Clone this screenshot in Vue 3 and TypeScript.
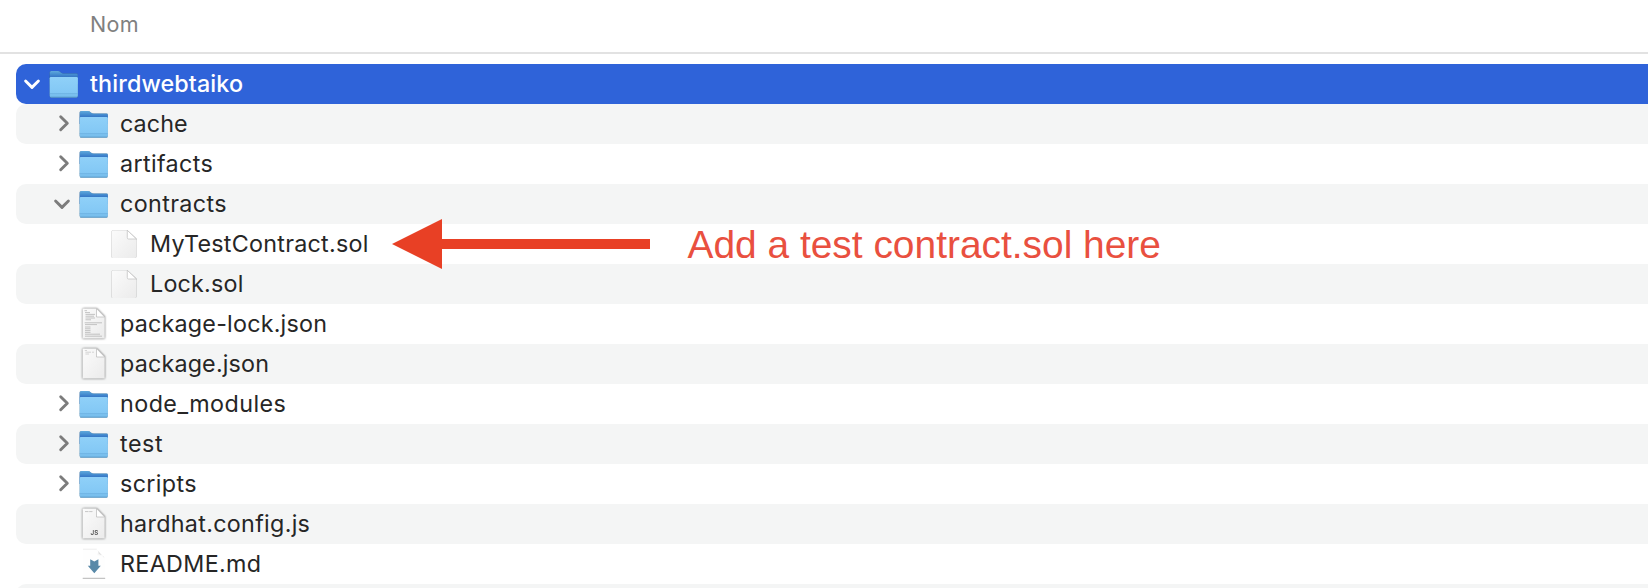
<script setup lang="ts">
type Kind = 'folder' | 'blank' | 'lines' | 'json' | 'js' | 'md'

interface Entry {
  name: string
  kind: Kind
  depth: number
  open?: boolean
  spacing: number
}

const entries: Entry[] = [
  { name: 'thirdwebtaiko', kind: 'folder', depth: 0, open: true, spacing: 0.12 },
  { name: 'cache', kind: 'folder', depth: 1, open: false, spacing: 0.08 },
  { name: 'artifacts', kind: 'folder', depth: 1, open: false, spacing: 0.36 },
  { name: 'contracts', kind: 'folder', depth: 1, open: true, spacing: 0.38 },
  { name: 'MyTestContract.sol', kind: 'blank', depth: 2, spacing: 0.26 },
  { name: 'Lock.sol', kind: 'blank', depth: 2, spacing: 0.22 },
  { name: 'package-lock.json', kind: 'lines', depth: 1, spacing: 0.22 },
  { name: 'package.json', kind: 'json', depth: 1, spacing: 0.18 },
  { name: 'node_modules', kind: 'folder', depth: 1, open: false, spacing: 0.45 },
  { name: 'test', kind: 'folder', depth: 1, open: false, spacing: 0.55 },
  { name: 'scripts', kind: 'folder', depth: 1, open: false, spacing: 0.36 },
  { name: 'hardhat.config.js', kind: 'js', depth: 1, spacing: 0.31 },
  { name: 'README.md', kind: 'md', depth: 1, spacing: 0.34 },
]
</script>

<template>
  <main class="finder">
    <svg class="defs" width="0" height="0" aria-hidden="true">
      <defs>
        <linearGradient id="folder-back" gradientUnits="userSpaceOnUse" x1="0" y1="7" x2="0" y2="13">
          <stop offset="0" stop-color="#5fa9dc" />
          <stop offset="0.45" stop-color="#4a93d2" />
          <stop offset="1" stop-color="#3576c6" />
        </linearGradient>
        <linearGradient id="folder-front" x1="0" y1="0" x2="0" y2="1">
          <stop offset="0" stop-color="#8fd0f8" />
          <stop offset="0.75" stop-color="#83c8f5" />
          <stop offset="1" stop-color="#72b9e8" />
        </linearGradient>
        <linearGradient id="paper" x1="0" y1="0" x2="1" y2="1">
          <stop offset="0" stop-color="#fbfbfb" />
          <stop offset="1" stop-color="#ebebeb" />
        </linearGradient>
      </defs>
    </svg>

    <header class="columns"><span>Nom</span></header>

    <ul class="tree">
      <li
        v-for="entry in entries"
        :key="entry.name"
        class="row"
        :class="[`depth-${entry.depth}`, { selected: entry.depth === 0 }]"
      >
        <span class="toggle">
          <svg v-if="entry.open === true" width="30" height="40" viewBox="0 0 30 40">
            <path d="M9.6 17 L16 23.4 L22.4 17" class="chevron" />
          </svg>
          <svg v-else-if="entry.open === false" width="30" height="40" viewBox="0 0 30 40">
            <path d="M14.7 12.8 L21.3 19.3 L14.7 25.8" class="chevron" />
          </svg>
        </span>

        <svg v-if="entry.kind === 'folder'" class="icon shadowed" width="30" height="40" viewBox="0.7 0 30 40">
          <path d="M.3 8.6 Q.3 7 1.9 7 H8.6 Q10.2 7 11.3 8.2 Q12.6 9.6 14.4 9.6 H27.2 Q28.6 9.6 28.6 11 V20 H.3 Z" fill="url(#folder-back)" />
          <path d="M.3 14.3 Q.3 13 1.6 13 H27.3 Q28.6 13 28.6 14.3 V31.8 Q28.6 33.5 27 33.5 H1.9 Q.3 33.5 .3 31.8 Z" fill="url(#folder-front)" />
          <path d="M.5 29.7 H28.4" stroke="#6aaee0" stroke-width=".8" />
          <path d="M.9 33.1 H28" stroke="#5c9fd2" stroke-width=".8" />
        </svg>

        <svg v-else-if="entry.kind === 'blank'" class="icon shadowed" width="30" height="40" viewBox="0 0 30 40">
          <path d="M4 6.3 H17.3 L26.4 15 V32.6 Q26.4 34.1 24.9 34.1 H3 Q1.5 34.1 1.5 32.6 V7.8 Q1.5 6.3 3 6.3 Z" fill="url(#paper)" />
          <path d="M17.3 6.3 V13.8 Q17.3 15 18.5 15 H26.4 Z" fill="#fff" stroke="#bdbdbd" stroke-width=".7" />
        </svg>

        <svg v-else-if="entry.kind === 'md'" class="icon" width="30" height="40" viewBox="0 0 30 40">
          <path d="M3 5.2 H17 L24.8 14 V33.8 H3 Z" fill="#fefefe" />
          <path d="M3 5.2 H16.8" stroke="#eee" stroke-width="1" />
          <path d="M16.6 5.2 Q19 7 18.4 10.6 Q23 10.6 24.6 14.2 Z" fill="#dedede" />
          <path d="M17.6 9 V11.3 Q22 11 23.8 13.6 Z" fill="#f6f6f6" />
          <path d="M2.7 34.3 H25.2" stroke="#b5b5b5" stroke-width="1" />
          <path d="M10.2 15.2 L14.3 17.4 L18.4 15.2 V21.8 H20.8 L14.3 29.2 L7.8 21.8 H10.2 Z" fill="#5989a8" />
        </svg>

        <svg v-else class="icon strong" width="30" height="40" viewBox="0 0 30 40">
          <path d="M3.6 4.6 H16.5 L24.7 13 V34.5 H2.6 V5.6 Q2.6 4.6 3.6 4.6 Z" fill="url(#paper)" />
          <path d="M16.5 4.6 V13 H24.7 Z" fill="#fff" stroke="#b8b8b8" stroke-width=".7" />
          <g v-if="entry.kind === 'lines'" stroke="#bcbcbc" stroke-width=".9">
            <path d="M4.5 6.7 H7 M5 8.6 H10 M5.5 10.4 H15 M5.5 12.2 H14 M5.5 14 H15 M5.5 15.8 H11" />
            <path d="M4.7 18.8 H22 M5 20.6 H17" />
            <path d="M5 23 H10.5 M5 24.8 H10.5 M5 26.6 H10.5 M5 28.4 H10.5 M5 30.2 H20 M5 32.2 H22" />
          </g>
          <path v-else-if="entry.kind === 'json'" d="M4.8 6.5 H7 M5.4 8.2 H11 M12 8.2 H14 M5.4 10 H9" stroke="#cfcfcf" stroke-width=".9" />
          <path v-else d="M5 7.6 H8.5 M9.2 7.6 H12.5" stroke="#c6c6c6" stroke-width="1" />
          <text v-if="entry.kind === 'js'" x="14.4" y="31" class="badge">JS</text>
        </svg>

        <span class="label" :style="{ letterSpacing: `${entry.spacing}px` }">{{ entry.name }}</span>

        <span v-if="entry.name === 'MyTestContract.sol'" class="callout">
          <svg width="258" height="50" viewBox="0 0 258 50">
            <path d="M0 25 L50 0 V20 H258 V30 H50 V50 Z" fill="#e84025" />
          </svg>
          <span class="hint">Add a test contract.sol here</span>
        </span>
      </li>
      <li class="row"></li>
    </ul>
  </main>
</template>

<style>
html,
body {
  margin: 0;
  overflow: hidden;
  background: #fff;
}
</style>

<style scoped>
.finder {
  height: 588px;
  overflow: hidden;
  font-family: Inter, "Liberation Sans", sans-serif;
  color: #262626;
}

.defs {
  display: block;
}

.columns {
  box-sizing: border-box;
  height: 54px;
  padding-left: 90px;
  border-bottom: 2px solid #e2e2e2;
  font-size: 21.5px;
  line-height: 48px;
  letter-spacing: 0.3px;
  color: #808080;
}

.tree {
  margin: 0;
  padding: 10px 0 0 16px;
  list-style: none;
}

.row {
  position: relative;
  display: flex;
  align-items: flex-start;
  height: 40px;
  border-radius: 10px 0 0 10px;
}

.row:nth-child(even) {
  background: #f4f5f5;
}

.row.selected {
  background: #2f63d9;
  color: #fff;
  font-weight: 500;
}

.depth-1 {
  padding-left: 30px;
}

.depth-2 {
  padding-left: 60px;
}

.toggle {
  flex: none;
  width: 34px;
  height: 40px;
}

.toggle svg,
.icon {
  display: block;
  overflow: visible;
}

.chevron {
  fill: none;
  stroke: #7c7c7c;
  stroke-width: 2.9;
  stroke-linecap: round;
  stroke-linejoin: round;
}

.selected .chevron {
  stroke: #fff;
}

.icon {
  flex: none;
  margin-right: 10px;
}

.shadowed {
  filter: drop-shadow(0 0.8px 0.7px rgba(0, 0, 0, 0.38));
}

.strong {
  filter: drop-shadow(0 0.8px 0.9px rgba(0, 0, 0, 0.6));
}

.badge {
  font: 600 6.3px Inter, sans-serif;
  text-anchor: middle;
  fill: #555;
}

.label {
  font-size: 23.3px;
  line-height: 39px;
  white-space: pre;
}

.callout {
  position: absolute;
  z-index: 1;
  left: 376px;
  top: -5px;
  display: flex;
  align-items: center;
  gap: 37.5px;
  height: 50px;
}

.hint {
  font-family: "Liberation Sans", Arial, sans-serif;
  font-size: 38.9px;
  line-height: 50px;
  padding-top: 2px;
  white-space: pre;
  color: #e9503f;
}
</style>
